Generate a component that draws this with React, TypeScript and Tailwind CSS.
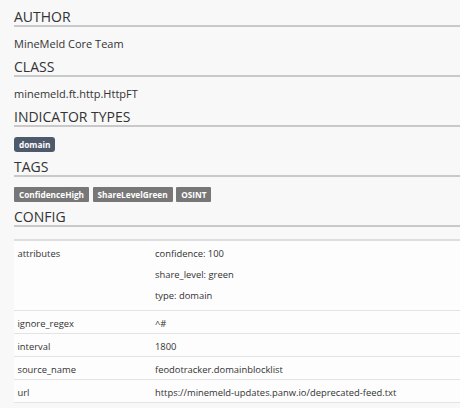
const ROWS: { key: string; values: string[] }[] = [
  { key: "attributes", values: ["confidence: 100", "share_level: green", "type: domain"] },
  { key: "ignore_regex", values: ["^#"] },
  { key: "interval", values: ["1800"] },
  { key: "source_name", values: ["feodotracker.domainblocklist"] },
  { key: "url", values: ["https://minemeld-updates.panw.io/deprecated-feed.txt"] },
];

const TAGS = ["ConfidenceHigh", "ShareLevelGreen", "OSINT"];

function Heading({ children }: { children: React.ReactNode }) {
  return (
    <h2 className="text-[14px] leading-[16px] text-[#333] border-b-2 border-[#c9c9c9]">
      {children}
    </h2>
  );
}

export default function App() {
  return (
    <div
      className="h-screen bg-[#f8f8f8] pl-[14px] pt-[9px] text-[#333] overflow-hidden"
      style={{ fontFamily: '"Open Sans", "Liberation Sans", sans-serif' }}
    >
      <Heading>AUTHOR</Heading>
      <p className="text-[11px] leading-[16px] pt-[9px] pb-[7px]">MineMeld Core Team</p>

      <Heading>CLASS</Heading>
      <p className="text-[11px] leading-[16px] pt-[9px] pb-[7px]">minemeld.ft.http.HttpFT</p>

      <Heading>INDICATOR TYPES</Heading>
      <div className="pt-[10px] pb-[7px] flex">
        <span className="bg-[#4f596c] text-white text-[8.25px] font-bold leading-[15px] px-[5px] rounded-[3px]">
          domain
        </span>
      </div>

      <Heading>TAGS</Heading>
      <div className="pt-[10px] pb-[7px] flex gap-[3.5px]">
        {TAGS.map((t) => (
          <span key={t} className="bg-[#777] text-white text-[8.25px] font-bold leading-[15px] px-[5px] rounded-[1px]">
            {t}
          </span>
        ))}
      </div>

      <Heading>CONFIG</Heading>
      <div className="mt-[12px] bg-[#fdfdfd] border-t-2 border-[#dedede] text-[9.4px]">
        {ROWS.map((r) => (
          <div key={r.key} className="flex border-b border-[#e3e3e3]">
            <div className="w-[137px] shrink-0 pl-[3.5px] pt-[4.5px] pb-[1.5px] leading-[16px]">{r.key}</div>
            <div className="pl-[4px] pt-[4.5px] pb-[1.5px] leading-[16px]">
              {r.values.length > 1 ? (
                <div className="mb-[3px]">
                  {r.values.map((v) => (
                    <div key={v} className="mb-[5px]">
                      {v}
                    </div>
                  ))}
                </div>
              ) : (
                r.values[0]
              )}
            </div>
          </div>
        ))}
      </div>
    </div>
  );
}
